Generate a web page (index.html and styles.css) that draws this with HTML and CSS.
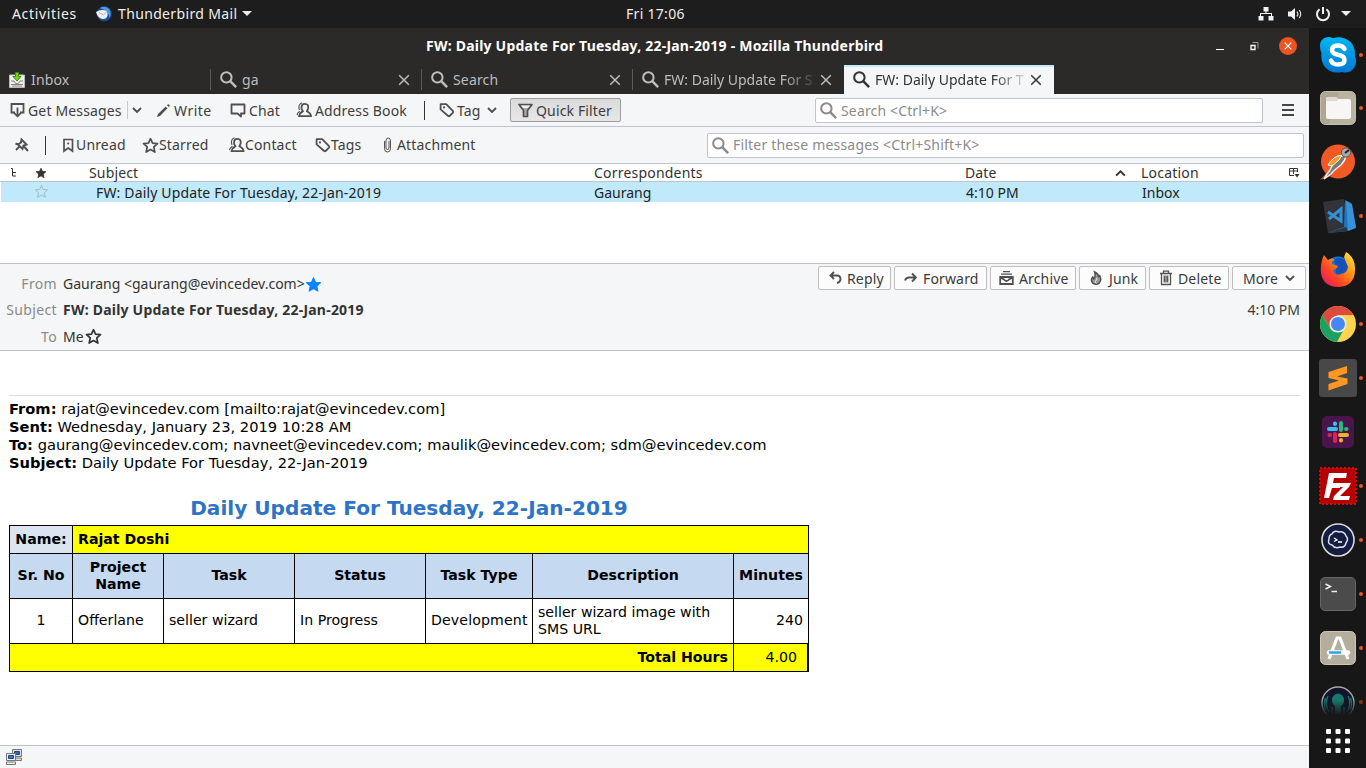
FILE: index.html
```html
<!DOCTYPE html>
<html lang="en">
<head>
<meta charset="utf-8">
<title>FW: Daily Update For Tuesday, 22-Jan-2019 - Mozilla Thunderbird</title>
<link rel="stylesheet" href="styles.css">
</head>
<body>
<svg class="defs" width="0" height="0">
  <symbol id="mag" viewBox="0 0 16 16"><circle cx="6" cy="6" r="4.9" fill="none" stroke="currentColor" stroke-width="1.9"/><path d="M9.6 9.6L15.2 15.2" stroke="currentColor" stroke-width="2.3"/></symbol>
  <symbol id="x" viewBox="0 0 12 12"><path d="M1.2 1.2L10.8 10.8M10.8 1.2L1.2 10.8" stroke="currentColor" stroke-width="1.5"/></symbol>
  <symbol id="chev" viewBox="0 0 10 6"><path d="M1 1L5 5L9 1" fill="none" stroke="currentColor" stroke-width="1.9"/></symbol>
  <symbol id="tag" viewBox="0 0 16 16"><path d="M1.6 2.2H7.2L14 9.2Q14.6 10 14 10.7L10.6 14Q9.9 14.5 9.2 14L1.6 7.4Z" fill="none" stroke="currentColor" stroke-width="1.8" stroke-linejoin="round"/><circle cx="5" cy="5.4" r="1.1" fill="currentColor"/></symbol>
  <symbol id="person" viewBox="0 0 16 16"><path d="M8.8 1.8C11.6 1.8 12.5 3.8 12.2 6C12 7.6 11.2 8.3 10.9 9.3C12.8 10.6 14.9 11 15 14.2H3C3.1 11 5.3 10.6 6.9 9.3C6.3 8.2 5.5 7.4 5.5 5.7C5.5 3.4 6.5 1.8 8.8 1.8Z" fill="none" stroke="currentColor" stroke-width="1.8"/><path d="M3.5 8C2.2 4.6 3.1 1.7 6 .7M1 13.2Q1.4 10.5 4 9.2" fill="none" stroke="currentColor" stroke-width="1.1"/></symbol>
  <symbol id="star" viewBox="0 0 16 16"><path d="M8 1.6L9.9 5.8L14.6 6.2L11.1 9.4L12.1 14.2L8 11.8L3.9 14.2L4.9 9.4L1.4 6.2L6.1 5.8Z" stroke="currentColor" stroke-linejoin="round"/></symbol>
</svg>

<header class="topbar">
  <span class="activities">Activities</span>
  <svg class="tb-logo" width="16" height="16" viewBox="0 0 16 16"><circle cx="8.3" cy="7.8" r="7.5" fill="#1c4e9c"/><path d="M4 2Q9-1 13 3Q16 7 13.5 12Q13 5 4 2Z" fill="#4f9be4"/><path d="M0 6Q4 3.5 8 4.2Q12 5 11.6 9Q11 13 7 13Q2 13 0 6Z" fill="#f1f2f6"/><path d="M3 6.500L7.500 9L10.500 6" fill="none" stroke="#a6aec2"/></svg>
  <span class="app-name">Thunderbird Mail</span>
  <i class="caret"></i>
  <span class="clock">Fri 17:06</span>
  <svg class="net" width="16" height="14" viewBox="0 0 16 14"><path d="M5.500 0h5v4.500h-2V6H14v3h1.500v4.500h-5V9H13V7H3v2h2.500v4.500h-5V9H2V6h5.500V4.500h-2z" fill="#f2f2f2"/></svg>
  <svg class="vol" width="16" height="14" viewBox="0 0 16 14"><path d="M1 4.500h3L8 1v12L4 9.500H1z" fill="#f2f2f2"/><path d="M10 4.500q1.700 2.500 0 5M12.300 3q2.800 4 0 8" fill="none" stroke="#ddd" stroke-width="1.200"/></svg>
  <svg class="pow" width="16" height="16" viewBox="0 0 16 16"><path d="M4.600 3.300A6 6 0 1 0 11.400 3.300M8 1v7" fill="none" stroke="#f2f2f2" stroke-width="2"/></svg>
  <i class="caret"></i>
</header>

<div class="desktop">
<main class="window">
  <div class="titlebar">
    <span class="win-title">FW: Daily Update For Tuesday, 22-Jan-2019 - Mozilla Thunderbird</span>
    <div class="win-controls">
      <svg width="8" height="10"><path d="M0 8.500h8" stroke="#fff"/></svg>
      <svg class="restore" width="9" height="9"><path d="M1 3.500h4v4H1z" fill="none" stroke="#fff" stroke-width="1.300"/><path d="M2.500.500h5.500v6" fill="none" stroke="#999"/></svg>
      <svg width="18" height="18"><circle cx="9" cy="9" r="9" fill="#e95420"/><path d="M5.700 5.700l6.600 6.600M12.300 5.700l-6.600 6.600" stroke="#fff" stroke-width="1.200"/></svg>
    </div>
  </div>

  <nav class="tabs">
    <div class="tab"><svg width="16" height="16" viewBox="0 0 16 16"><path d="M.500 3h15v12.500H.500z" fill="#eee" stroke="#bbb"/><path d="M2 9h3l1.500 2.500h3L11 9h3M2 12.500h12M3 14h10" stroke="#888" fill="none"/><path d="M6.500.500h3v4H12l-4 4.500-4-4.500h2.500z" fill="#73d216" stroke="#3f8f0a"/></svg><span class="tab-text">Inbox</span></div>
    <div class="tab"><svg width="17" height="17"><use href="#mag"/></svg><span class="tab-text">ga</span><svg class="close" width="12" height="12"><use href="#x"/></svg></div>
    <div class="tab"><svg width="17" height="17"><use href="#mag"/></svg><span class="tab-text">Search</span><svg class="close" width="12" height="12"><use href="#x"/></svg></div>
    <div class="tab last"><svg width="17" height="17"><use href="#mag"/></svg><span class="tab-text fade">FW: Daily Update For S</span><svg class="close" width="12" height="12"><use href="#x"/></svg></div>
    <div class="tab active"><svg width="17" height="17"><use href="#mag"/></svg><span class="tab-text fade">FW: Daily Update For T</span><svg class="close" width="12" height="12"><use href="#x"/></svg></div>
  </nav>

  <div class="toolbar">
    <div class="tool gap3"><svg width="15" height="16" viewBox="0 0 15 16"><path d="M5 10.500H1.500V2H13.500V10.500H10" fill="none" stroke="currentColor" stroke-width="1.800"/><path d="M7.500 5.500V14M4 10.800L7.500 14.300L11 10.800" fill="none" stroke="currentColor" stroke-width="1.800"/></svg><span>Get Messages</span></div>
    <div class="tool split"><svg width="10" height="6"><use href="#chev"/></svg></div>
    <div class="tool gap3"><svg width="15" height="15" viewBox="0 0 15 15"><path d="M1 14L2 11L9.700 3.500L11.500 5.300L4 13Z" fill="currentColor"/><path d="M11 2.200L12.200 1L14 2.800L12.800 4Z" fill="currentColor"/></svg><span class="wide">Write</span></div>
    <div class="tool gap3"><svg width="16" height="15" viewBox="0 0 16 15"><path d="M1.500 1.500H14.500V10.500H11V13.500L7.500 10.500H1.500Z" fill="none" stroke="currentColor" stroke-width="1.800" stroke-linejoin="round"/></svg><span>Chat</span></div>
    <div class="tool gap3"><svg width="16" height="16"><use href="#person"/></svg><span>Address Book</span></div>
    <div class="vsep"></div>
    <div class="tool gap2"><svg width="16" height="16"><use href="#tag"/></svg><span>Tag</span><svg class="tag-chev" width="10" height="6"><use href="#chev"/></svg></div>
    <div class="tool pressed gap3"><svg width="15" height="15" viewBox="0 0 15 15"><path d="M1 1.500H14L9.500 7.500V13.500H5.500V7.500Z" fill="#aaa" stroke="currentColor" stroke-width="1.700" stroke-linejoin="round"/><path d="M3 2.500h9l-2 2.500H5z" fill="#eee"/></svg><span>Quick Filter</span></div>
    <div class="field main-search"><svg width="17" height="17"><use href="#mag"/></svg><span>Search &lt;Ctrl+K&gt;</span></div>
    <svg class="burger" width="12" height="12"><path d="M0 1h12M0 6h12M0 11h12" stroke="#444" stroke-width="2"/></svg>
  </div>

  <div class="filterbar">
    <svg class="pin" width="16" height="16" viewBox="0 0 16 16"><path d="M7.500 2.500L12.500 7.500L9.500 8.500L8.500 12L4 7.500L7 5.500Z" fill="none" stroke="currentColor" stroke-width="1.900"/><path d="M5.500 9.500L2 13M10 9.500L14 14M1.500 6.500L4 7.500" fill="none" stroke="currentColor" stroke-width="1.900"/></svg>
    <div class="vsep"></div>
    <div class="tool"><svg width="16" height="16" viewBox="0 0 16 16"><path d="M4 2.500H12.500V14L8.200 11L4 14Z" fill="none" stroke="currentColor" stroke-width="1.700"/><circle cx="8.200" cy="6.500" r="1.100" fill="currentColor"/></svg><span>Unread</span></div>
    <div class="tool"><svg class="hollow" width="17" height="17"><use href="#star"/></svg><span>Starred</span></div>
    <div class="tool"><svg width="17" height="16"><use href="#person"/></svg><span>Contact</span></div>
    <div class="tool"><svg width="16" height="16"><use href="#tag"/></svg><span>Tags</span></div>
    <div class="tool gap2"><svg width="14" height="16" viewBox="0 0 14 16"><path d="M3.500 4V11.500Q3.500 15 6.500 15Q9.500 15 9.500 11.500V4Q9.500 1 7.200 1Q5 1 5 4V11Q5 12.500 6.500 12.500Q8 12.500 8 11V4" fill="none" stroke="currentColor" stroke-width="1"/></svg><span>Attachment</span></div>
    <div class="field quick-search"><svg width="17" height="17"><use href="#mag"/></svg><span>Filter these messages &lt;Ctrl+Shift+K&gt;</span></div>
  </div>

  <div class="list-head">
    <svg class="thread" width="6" height="10"><path d="M0 .500h1.500v7.500h3.500M1.500 4.500H5" fill="none" stroke="#333"/></svg>
    <svg class="solid" width="12" height="12"><use href="#star"/></svg>
    <span>Subject</span><span class="mid">Correspondents</span><span>Date</span>
    <svg width="11" height="7" viewBox="0 0 10 6"><path d="M1 5L5 1L9 5" fill="none" stroke="#333" stroke-width="1.700"/></svg>
    <span class="mid">Location</span>
    <svg width="11" height="10"><path d="M8.500 4V.500H.500V7.500H5M.500 3h8M4.500 0v6" fill="none" stroke="#333"/><path d="M5.500 6h5l-2.500 3.500z" fill="#333"/></svg>
  </div>
  <div class="list-row">
    <svg class="faint" width="15" height="15"><use href="#star"/></svg>
    <span class="row-subject">FW: Daily Update For Tuesday, 22-Jan-2019</span><span class="tight">Gaurang</span><span class="tight">4:10 PM</span><span class="tight">Inbox</span>
  </div>
  <div class="list-empty"></div>

  <section class="msg-head">
    <div class="fields">
      <label>From</label><div class="value"><span class="addr">Gaurang &lt;gaurang@evincedev.com&gt;</span><svg class="blue" width="17" height="17"><use href="#star"/></svg></div>
      <label>Subject</label><div class="value"><b>FW: Daily Update For Tuesday, 22-Jan-2019</b></div>
      <label>To</label><div class="value"><span class="me">Me</span><svg class="hollow dark" width="17" height="17"><use href="#star"/></svg></div>
    </div>
    <div class="side">
      <div class="actions">
        <div class="act reply"><svg width="13" height="14" viewBox="0 0 13 14"><path d="M5 1L1.500 4.500L5 8M2 4.500H8Q11.500 4.500 11.500 8Q11.500 11 8 12" fill="none" stroke="currentColor" stroke-width="1.900"/></svg><span>Reply</span></div>
        <div class="act forward"><svg width="13" height="12" viewBox="0 0 13 12"><path d="M8 1.500L12 5.500L8 9.500M12 5.500H5Q2 5.500 1 8.500" fill="none" stroke="currentColor" stroke-width="1.900"/></svg><span>Forward</span></div>
        <div class="act archive"><svg width="15" height="14" viewBox="0 0 15 14"><path d="M4 .700h7M2 3.200h11" stroke="currentColor" stroke-width="1.300"/><path d="M1.200 6H13.800V13H1.200ZM1.500 6.500L5 8.500Q7.500 11.500 10 8.500L13.500 6.500" fill="none" stroke="currentColor" stroke-width="1.800"/></svg><span>Archive</span></div>
        <div class="act junk"><svg width="12" height="16" viewBox="0 0 13 16"><path d="M5 1.500Q10 4 9 7L10.500 5.500Q13 10 10 13.500Q6.500 16 3 13.500Q0 10 3 7L4 9Q6.500 6 5 1.500Z" fill="#999" stroke="currentColor" stroke-width="1.600"/><path d="M7 8Q8 10 6 11.500Q5 13 7 14" fill="none" stroke="#eee"/></svg><span>Junk</span></div>
        <div class="act delete"><svg width="14" height="16" viewBox="0 0 14 16"><path d="M1 3.500H13M4.500 3V1.200H9.500V3M2.500 4V14.500H11.500V4M5.300 5.500V12.500M7 5.500V12.500M8.700 5.500V12.500" fill="none" stroke="currentColor" stroke-width="1.300"/></svg><span>Delete</span></div>
        <div class="act more"><span>More</span><svg width="10" height="6"><use href="#chev"/></svg></div>
      </div>
      <div class="time tight">4:10 PM</div>
    </div>
  </section>

  <article class="mail">
    <div class="quoted">
      <div><b>From:</b> rajat@evincedev.com [mailto:rajat@evincedev.com]</div>
      <div><b>Sent:</b> Wednesday, January 23, 2019 10:28 AM</div>
      <div><b>To:</b> gaurang@evincedev.com; navneet@evincedev.com; maulik@evincedev.com; sdm@evincedev.com</div>
      <div><b>Subject:</b> Daily Update For Tuesday, 22-Jan-2019</div>
    </div>
    <h1>Daily Update For Tuesday, 22-Jan-2019</h1>
    <table>
      <colgroup><col class="c1"><col class="c2"><col class="c3"><col class="c4"><col class="c5"><col class="c6"><col class="c7"></colgroup>
      <tr class="r-name"><th class="pale">Name:</th><th class="yellow left" colspan="6">Rajat Doshi</th></tr>
      <tr class="r-head"><th>Sr. No</th><th>Project<br>Name</th><th>Task</th><th>Status</th><th>Task Type</th><th>Description</th><th>Minutes</th></tr>
      <tr class="r-data"><td class="center">1</td><td>Offerlane</td><td>seller wizard</td><td>In Progress</td><td class="dev">Development</td><td>seller wizard image with<br>SMS URL</td><td class="right">240</td></tr>
      <tr class="r-total"><th class="yellow right" colspan="6">Total Hours</th><td class="yellow right total">4.00</td></tr>
    </table>
  </article>

  <footer class="status"><svg width="16" height="16" viewBox="0 0 16 16"><path d="M6.500.500h9v7h-9zM7 9h8.500v2.500H7z" fill="#ddd" stroke="#777"/><path d="M8.500 2.500h5v3h-5z" fill="#3465a4" stroke="#204a87"/><path d="M.500 4.500h9v7h-9zM.500 13h9v2.500h-9z" fill="#eee" stroke="#777"/><path d="M2.500 6.500h5v3h-5z" fill="#3f72c4" stroke="#204a87"/></svg></footer>
</main>

<aside class="dock">
  <div class="app run"><svg width="38" height="38" viewBox="0 0 38 38"><defs><linearGradient id="sk" x2="0" y2="1"><stop stop-color="#00b7f1"/><stop offset="1" stop-color="#0078d4"/></linearGradient></defs><path d="M1 10C1 3 7-1 14 2C27-1 37 7 36 20C40 30 32 39 23 36C10 39 1 30 2.500 17Q1 14 1 10Z" fill="url(#sk)"/><path d="M25.500 13Q24 9.500 19 9.500Q13 9.500 13 14Q13 17.500 19 18.800Q25.500 20 25.500 24Q25.500 28.500 19 28.500Q13.500 28.500 12 24.500" fill="none" stroke="#fff" stroke-width="4.500" stroke-linecap="round"/></svg></div>
  <div class="app run"><svg width="38" height="38" viewBox="0 0 38 38"><rect x="1.500" y="2.500" width="35" height="33" rx="5" fill="#aea793" stroke="#c3bda9"/><path d="M20 3h12q4 1 4 5v22q0 5-5 5H10z" fill="#b8b29e"/><path d="M7 10q0-2 2-2h8l2 2h11q2 0 2 2v16q0 2-2 2H9q-2 0-2-2z" fill="#f7f6f4"/><path d="M7 12V10q0-2 2-2h8l2 2-1 2z" fill="#dedad0"/></svg></div>
  <div class="app"><svg width="38" height="38" viewBox="0 0 38 38"><circle cx="19" cy="18.500" r="17" fill="#f15a24"/><path d="M1 37l8-9 5 4z" fill="#d9441a"/><path d="M25 12Q16 15 11 27L8 31L5 36L12 31Q15 27 22 22Q26 18 27 13Z" fill="#777" stroke="#eee" stroke-width="1.500"/><path d="M9 22q5-9 14-10l-3 5-7 6z" fill="#f59b23" stroke="#fff"/><circle cx="27" cy="9.500" r="4.600" fill="#aaa" stroke="#555"/><path d="M26 10l4-3" stroke="#222" stroke-width="2"/></svg></div>
  <div class="app run"><svg width="38" height="38" viewBox="0 0 38 38"><path d="M4 5l21-3 5 28-21 6z" fill="#32343a"/><path d="M26 3l6 3 5 24-8 4-20 2 16-6z" fill="#1f75bc"/><path d="M9 36L27 30L29 34Z" fill="#32343a"/><path d="M27 4l6 3 4 24-8 3z" fill="#3792d9"/><path d="M10 22L22 12V24L9 15" fill="none" stroke="#3590d5" stroke-width="3"/></svg></div>
  <div class="app"><svg width="38" height="38" viewBox="0 0 38 38"><defs><linearGradient id="fx" x1="1" y1="0" x2="0" y2="1"><stop stop-color="#fff44f"/><stop offset=".35" stop-color="#ff9a16"/><stop offset=".68" stop-color="#ff3d28"/><stop offset="1" stop-color="#d51479"/></linearGradient></defs><circle cx="19" cy="18" r="12.500" fill="#087cdc"/><path d="M15 8q8-4 14 5l1 14H18z" fill="#1750b8"/><path d="M5 4L9 9Q13 6 16 9Q12 10 13 13L19 15Q18 18 14 19Q15 25 22 23Q28 22 29 16L25 6L27 1Q37 7 36 20Q35 35 20 36Q4 36 2 22Q1 12 5 4Z" fill="url(#fx)"/></svg></div>
  <div class="app run"><svg width="38" height="38" viewBox="0 0 38 38"><circle cx="19" cy="19" r="18" fill="#fdd34f"/><path d="M3.400 10L11.200 23.500Q15 29 24 26L18 37A18 18 0 0 1 3.400 10Z" fill="#1ba261"/><path d="M19 10H34.600A18 18 0 0 0 3.400 10L11.200 23.500Z" fill="#dd4b3e"/><circle cx="19" cy="19" r="7.800" fill="#4688f1" stroke="#eef1f5" stroke-width="1.600"/></svg></div>
  <div class="app run"><svg width="38" height="38" viewBox="0 0 38 38"><rect width="38" height="38" rx="3" fill="#484848"/><path d="M9.500 13L28 7V14L18 17.500L28.500 19.500V25L9.500 31.500V25L20 21.500L9.500 19Z" fill="#ff9821"/></svg></div>
  <div class="app"><svg width="38" height="38" viewBox="0 0 38 38"><rect x="3" y="3" width="32" height="32" rx="5" fill="#4a154b"/><g stroke-width="4" stroke-linecap="round"><path d="M10 16h7M16 10.500v.500" stroke="#36c5f0"/><path d="M22 10v7M27.500 16h-.500" stroke="#2eb67d"/><path d="M28 22h-7M22 27.500v-.500" stroke="#ecb22e"/><path d="M16 28v-7M10.500 22h.500" stroke="#e01e5a"/></g></svg></div>
  <div class="app run"><svg width="38" height="38" viewBox="0 0 38 38"><rect x="1" y="1" width="36" height="36" fill="#b60000" stroke="#d10b0b" stroke-width="2" stroke-dasharray="2"/><path d="M10 6H28L27 11H15L14 16H22L21 21H13L10 31H5Z" fill="#fff"/><path d="M18 16H32L30 20L21 29H31L30 33H14L15 29L24 20H17Z" fill="#fff"/></svg></div>
  <div class="app run"><svg width="38" height="38" viewBox="0 0 38 38"><circle cx="19" cy="19" r="16" fill="#141c40" stroke="#d9dadd" stroke-width="1.600"/><path d="M13 13q2-4 7-2q5-1 7 4q3 3 0 7q-1 5-6 4q-5 2-8-2q-5-1-3-6q0-4 3-5z" fill="none" stroke="#dde" stroke-width="1.500"/><path d="M15 17l3 2-3 1.500M19 21h4" fill="none" stroke="#fff" stroke-width="1.300"/></svg></div>
  <div class="app run"><svg width="38" height="38" viewBox="0 0 38 38"><rect x="1.500" y="2.500" width="35" height="33" rx="4.500" fill="#4b4b4b" stroke="#666"/><path d="M6.500 9l5 2.500-5 2.500M12.500 16.500h5.500" fill="none" stroke="#eee" stroke-width="1.400"/></svg></div>
  <div class="app run"><svg width="38" height="38" viewBox="0 0 38 38"><rect x="1.500" y="2.500" width="35" height="33" rx="5" fill="#b5ae9d" stroke="#cbc6b9"/><path d="M10 30L18 9H21L29 30" fill="none" stroke="#fff" stroke-width="3.200"/><path d="M10 23.500h19" stroke="#fff" stroke-width="4.500" stroke-linecap="round"/><path d="M10 23.500H22" stroke="#22a7e8" stroke-width="2.500"/></svg></div>
  <div class="app run dim"><svg width="38" height="30" viewBox="0 0 38 30"><defs><linearGradient id="fd" x2="0" y2="1"><stop offset=".5" stop-color="#171717" stop-opacity="0"/><stop offset="1" stop-color="#171717"/></linearGradient></defs><circle cx="19" cy="18" r="16" fill="#14152a" stroke="#aaa" stroke-width="1.300"/><path d="M13 15a6 6.500 0 0 1 12 0q0 4-3 6v8h-6v-8q-3-2-3-6z" fill="#16776d"/><path d="M9 11q-4 8 1 16M29 11q4 8-1 16M6.500 13q-2 6 0 12M31.500 13q2 6 0 12M13 22v8M25 22v8" fill="none" stroke="#127c74" stroke-width="1.300"/><rect width="38" height="30" fill="url(#fd)"/></svg></div>
  <svg class="apps-grid" width="24" height="24" fill="#fff"><g id="dots"><rect width="5" height="5" rx="1"/><rect x="9.500" width="5" height="5" rx="1"/><rect x="19" width="5" height="5" rx="1"/></g><use href="#dots" y="9.500"/><use href="#dots" y="19"/></svg>
</aside>
</div>
</body>
</html>
```
FILE: styles.css
```css
* { box-sizing: border-box; }
body { margin: 0; width: 1366px; height: 768px; overflow: hidden; font: 14px/18px "Noto Sans", "Open Sans", sans-serif; letter-spacing: .15px; color: #3a3a3a; background: #fff; }
svg { display: block; flex: none; }
.defs { position: absolute; }
span, b, label { white-space: nowrap; }
.tight { letter-spacing: 0; }
.mid { letter-spacing: .2px; }
.wide { letter-spacing: .5px; }

.topbar { display: flex; align-items: center; height: 28px; background: #1d1d1d; color: #efefef; padding: 0 15px 1px 12px; }
.activities { width: 84px; letter-spacing: .65px; }
.tb-logo { margin-right: 6px; }
.app-name { width: 120px; letter-spacing: .35px; }
.caret { width: 0; height: 0; margin-left: 4px; border: 5px solid transparent; border-top-color: #eee; border-bottom: 0; }
.app-name + .caret { margin-left: 4px; }
.clock { margin-left: 374px; width: 632px; letter-spacing: .3px; }
.net { margin-right: 13px; }
.vol { margin-right: 12px; }
.pow { margin-right: 6px; }

.desktop { display: flex; height: 740px; }
.window { width: 1309px; display: flex; flex-direction: column; background: #fff; }
.titlebar { display: grid; grid-template-columns: 426px 1fr 82px; align-items: center; height: 37px; background: #2c2929; color: #fff; }
.win-title { grid-column: 2; font-weight: 700; letter-spacing: .22px; padding-bottom: 2px; }
.win-controls { display: flex; align-items: center; justify-content: space-between; margin-left: -11px; padding: 0 12px 1px 0; }
.restore { margin-left: 6px; }

.tabs { display: flex; height: 29px; background: #2c2929; color: #bdbdbd; }
.tab { display: flex; align-items: center; width: 211px; padding: 0 12px 0 9px; position: relative; }
.tab::after { content: ""; position: absolute; right: 0; top: 4px; width: 1px; height: 21px; background: #5c5a5a; }
.tab.last::after, .tab.active::after { display: none; }
.tab-text { margin-left: 5px; width: 151px; overflow: hidden; }
.tab .close { margin-left: 5px; }
.tab:first-child .tab-text { margin-left: 6px; }
.tab.active { background: #f5f6f7; color: #333; border-top: 2px solid #bfebfb; width: 210px; padding-bottom: 2px; }
.fade { -webkit-mask-image: linear-gradient(90deg, #000 118px, transparent 156px); mask-image: linear-gradient(90deg, #000 118px, transparent 156px); letter-spacing: 0; }

.toolbar { display: grid; grid-template-columns: 117px 29px 74px 66px 128px 15px 71px 111px 194px 448px 1fr; align-items: center; height: 33px; padding-left: 10px; background: #f5f6f7; border-bottom: 1px solid #c0c3cd; }
.tool { display: flex; align-items: center; color: #3d3d3d; }
.tool svg { color: #505050; }
.toolbar span { padding-top: 1px; }
.gap3 { gap: 3px; }
.gap2 { gap: 2px; }
.split { border-left: 1px solid #c8c8cc; height: 18px; padding-left: 4px; }
.tag-chev { margin-left: 4px; }
.vsep { width: 1px; height: 19px; background: #333; }
.pressed { height: 24px; padding-left: 7px; background: linear-gradient(#dadada, #e7e7e7); border: 1px solid #9c9c9c; border-radius: 2px; }
.field { display: flex; align-items: center; gap: 4px; height: 25px; padding-left: 4px; border: 1px solid #bfc3cb; border-radius: 2px; background: #fff; color: #8b8b8b; }
.main-search { grid-column: 10; }
.burger { margin-left: 19px; }

.filterbar { display: grid; grid-template-columns: 31px 15px 82px 86px 87px 66px 326px 597px; align-items: center; height: 37px; padding-left: 14px; background: #f5f6f7; border-bottom: 1px solid #c0c3c8; color: #505050; }
.quick-search { letter-spacing: .19px; }
.hollow { fill: none; stroke-width: 1.6; }

.list-head { display: grid; grid-template-columns: 24px 54px 505px 371px 150px 26px 148px 1fr; align-items: center; height: 18px; padding-left: 11px; border-bottom: 1px solid #c0c3c8; color: #333; }
.solid { fill: currentColor; }
.list-row { display: grid; grid-template-columns: 62px 498px 372px 176px 1fr; align-items: center; height: 20px; margin-left: 1px; padding: 1px 0 0 33px; background: #c0eafb; color: #222; }
.faint { fill: none; color: #9fb8c4; margin-top: -2px; }
.list-empty { height: 61px; }

.msg-head { display: flex; justify-content: space-between; height: 88px; background: #f5f6f7; border: solid #c0c3c8; border-width: 1px 0; }
.fields { display: grid; grid-template-columns: 57px 1fr; grid-template-rows: 26px 26px 27px; column-gap: 6px; align-items: center; padding-top: 7px; height: 86px; }
.fields label { text-align: right; color: #8a8a86; letter-spacing: .35px; }
.value { display: flex; align-items: center; color: #333; }
.value b { letter-spacing: .22px; }
.addr { width: 242px; letter-spacing: 0; }
.me { width: 22px; }
.blue { fill: #0a84ff; color: #0a84ff; }
.dark { color: #333; }
.side { padding: 2px 3px 0 0; }
.actions { display: flex; gap: 3px; }
.act { display: flex; align-items: center; height: 24px; border: 1px solid #bfbfbf; border-radius: 2px; background: #fcfcfc; padding-left: 10px; gap: 7px; }
.act span { padding-top: 1px; }
.act svg { color: #505050; }
.reply { width: 73px; gap: 5px; }
.forward { width: 93px; padding-left: 9px; gap: 6px; }
.archive { width: 86px; padding-left: 8px; gap: 5px; }
.junk { width: 67px; }
.delete { width: 80px; padding-left: 9px; gap: 5px; }
.more { width: 74px; }
.time { text-align: right; margin-top: 11px; padding-right: 6px; }

.mail { flex: 1; padding: 44px 8px 0 9px; font-family: "DejaVu Sans", sans-serif; letter-spacing: 0; color: #000; }
.quoted { border-top: 1px solid #dfe0e1; padding-top: 4px; font-size: 14.67px; line-height: 18px; }
.mail h1 { margin: 23px 0 4px; width: 800px; text-align: center; font-size: 20.13px; line-height: 26px; color: #2e74c6; }
table { width: 799px; table-layout: fixed; border-collapse: collapse; font-size: 14.15px; line-height: 17px; }
th, td { border: 1px solid #000; padding: 0 5px; white-space: nowrap; text-align: left; }
th { text-align: center; background: #c5d9f1; }
.c1 { width: 63px; } .c2 { width: 91px; } .c3 { width: 131px; } .c4 { width: 131px; } .c5 { width: 107px; } .c6 { width: 201px; } .c7 { width: 75px; }
.r-name, .r-total { height: 28px; }
.r-head, .r-data { height: 45px; }
.r-head th, .r-data td { padding-bottom: 1px; }
.dev { letter-spacing: .13px; }
.pale { background: #dbe5f1; }
.yellow { background: #ff0; }
.left { text-align: left; }
.right { text-align: right; }
.center { text-align: center; }
.total { padding-right: 11px; box-shadow: inset -1px 0 #000; }
.status { height: 23px; padding: 3px 6px; background: #f5f6f7; border-top: 1px solid #c0c3c8; }

.dock { width: 57px; background: #171717; display: flex; flex-direction: column; align-items: center; }
.app { flex: none; width: 57px; height: 54px; padding-left: 10px; display: flex; align-items: center; position: relative; }
.app:first-child { height: 53px; }
.run::after { content: ""; position: absolute; right: 3px; top: 25px; width: 4px; height: 4px; border-radius: 50%; background: #e95420; }
.dim { height: 50px; }
.dim::after { opacity: .5; }
.apps-grid { margin-top: 4px; }
```
